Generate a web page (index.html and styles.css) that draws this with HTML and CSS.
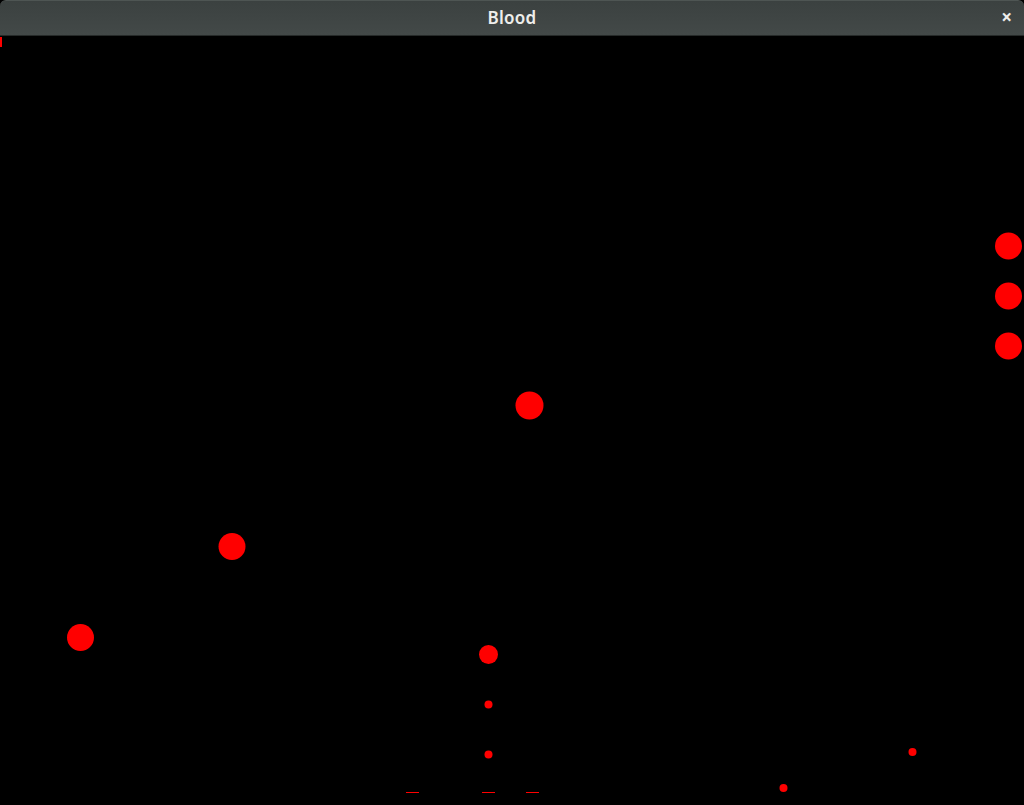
FILE: index.html
```html
<!DOCTYPE html>
<html>
<head>
<meta charset="utf-8">
<link rel="stylesheet" href="styles.css">
</head>
<body>
<div class="window">
  <div class="titlebar">
    <span class="title">Blood</span>
    <span class="close">×</span>
  </div>
  <div class="stage">
    <svg class="scene" width="1024" height="769" viewBox="0 36 1024 769" fill="#ff0000">
      <rect class="crisp" x="0" y="37" width="2" height="10"/>
      <circle cx="1008.5" cy="246" r="13.5"/>
      <circle cx="1008.5" cy="296" r="13.5"/>
      <circle cx="1008.5" cy="346" r="13.5"/>
      <circle cx="529.5" cy="405.5" r="14"/>
      <circle cx="232" cy="546.5" r="13.5"/>
      <circle cx="80.5" cy="637.5" r="13.5"/>
      <circle cx="488.5" cy="654.5" r="9.5"/>
      <circle cx="488.5" cy="704.5" r="4"/>
      <circle cx="488.5" cy="754.5" r="4"/>
      <circle cx="912.5" cy="752" r="4"/>
      <circle cx="783.5" cy="788" r="4"/>
      <rect class="crisp" x="406" y="792" width="13" height="1"/>
      <rect class="crisp" x="482" y="792" width="13" height="1"/>
      <rect class="crisp" x="526" y="792" width="13" height="1"/>
    </svg>
  </div>
</div>
</body>
</html>
```
FILE: styles.css
```css
html, body {
  margin: 0;
  padding: 0;
  background: #000;
  overflow: hidden;
}
.window {
  width: 1024px;
  height: 805px;
  display: flex;
  flex-direction: column;
  background: #000;
}
.titlebar {
  height: 36px;
  flex: 0 0 36px;
  box-sizing: border-box;
  padding-bottom: 2px;
  background: linear-gradient(#3b4140, #434948);
  border-top: 1px solid #4e5553;
  border-bottom: 1px solid #262a29;
  border-radius: 6px 6px 0 0;
  display: flex;
  align-items: center;
  justify-content: center;
  position: relative;
  font-family: "Noto Sans", "DejaVu Sans", sans-serif;
  color: #eeeeec;
}
.title {
  font-size: 17px;
  font-weight: 600;
  letter-spacing: 0.3px;
}
.close {
  position: absolute;
  right: 12px;
  top: 6px;
  font-size: 19px;
  font-weight: 700;
  line-height: 20px;
}
.stage {
  flex: 1;
  position: relative;
  background: #000;
}
.scene {
  display: block;
}
.crisp {
  shape-rendering: crispEdges;
}
```
